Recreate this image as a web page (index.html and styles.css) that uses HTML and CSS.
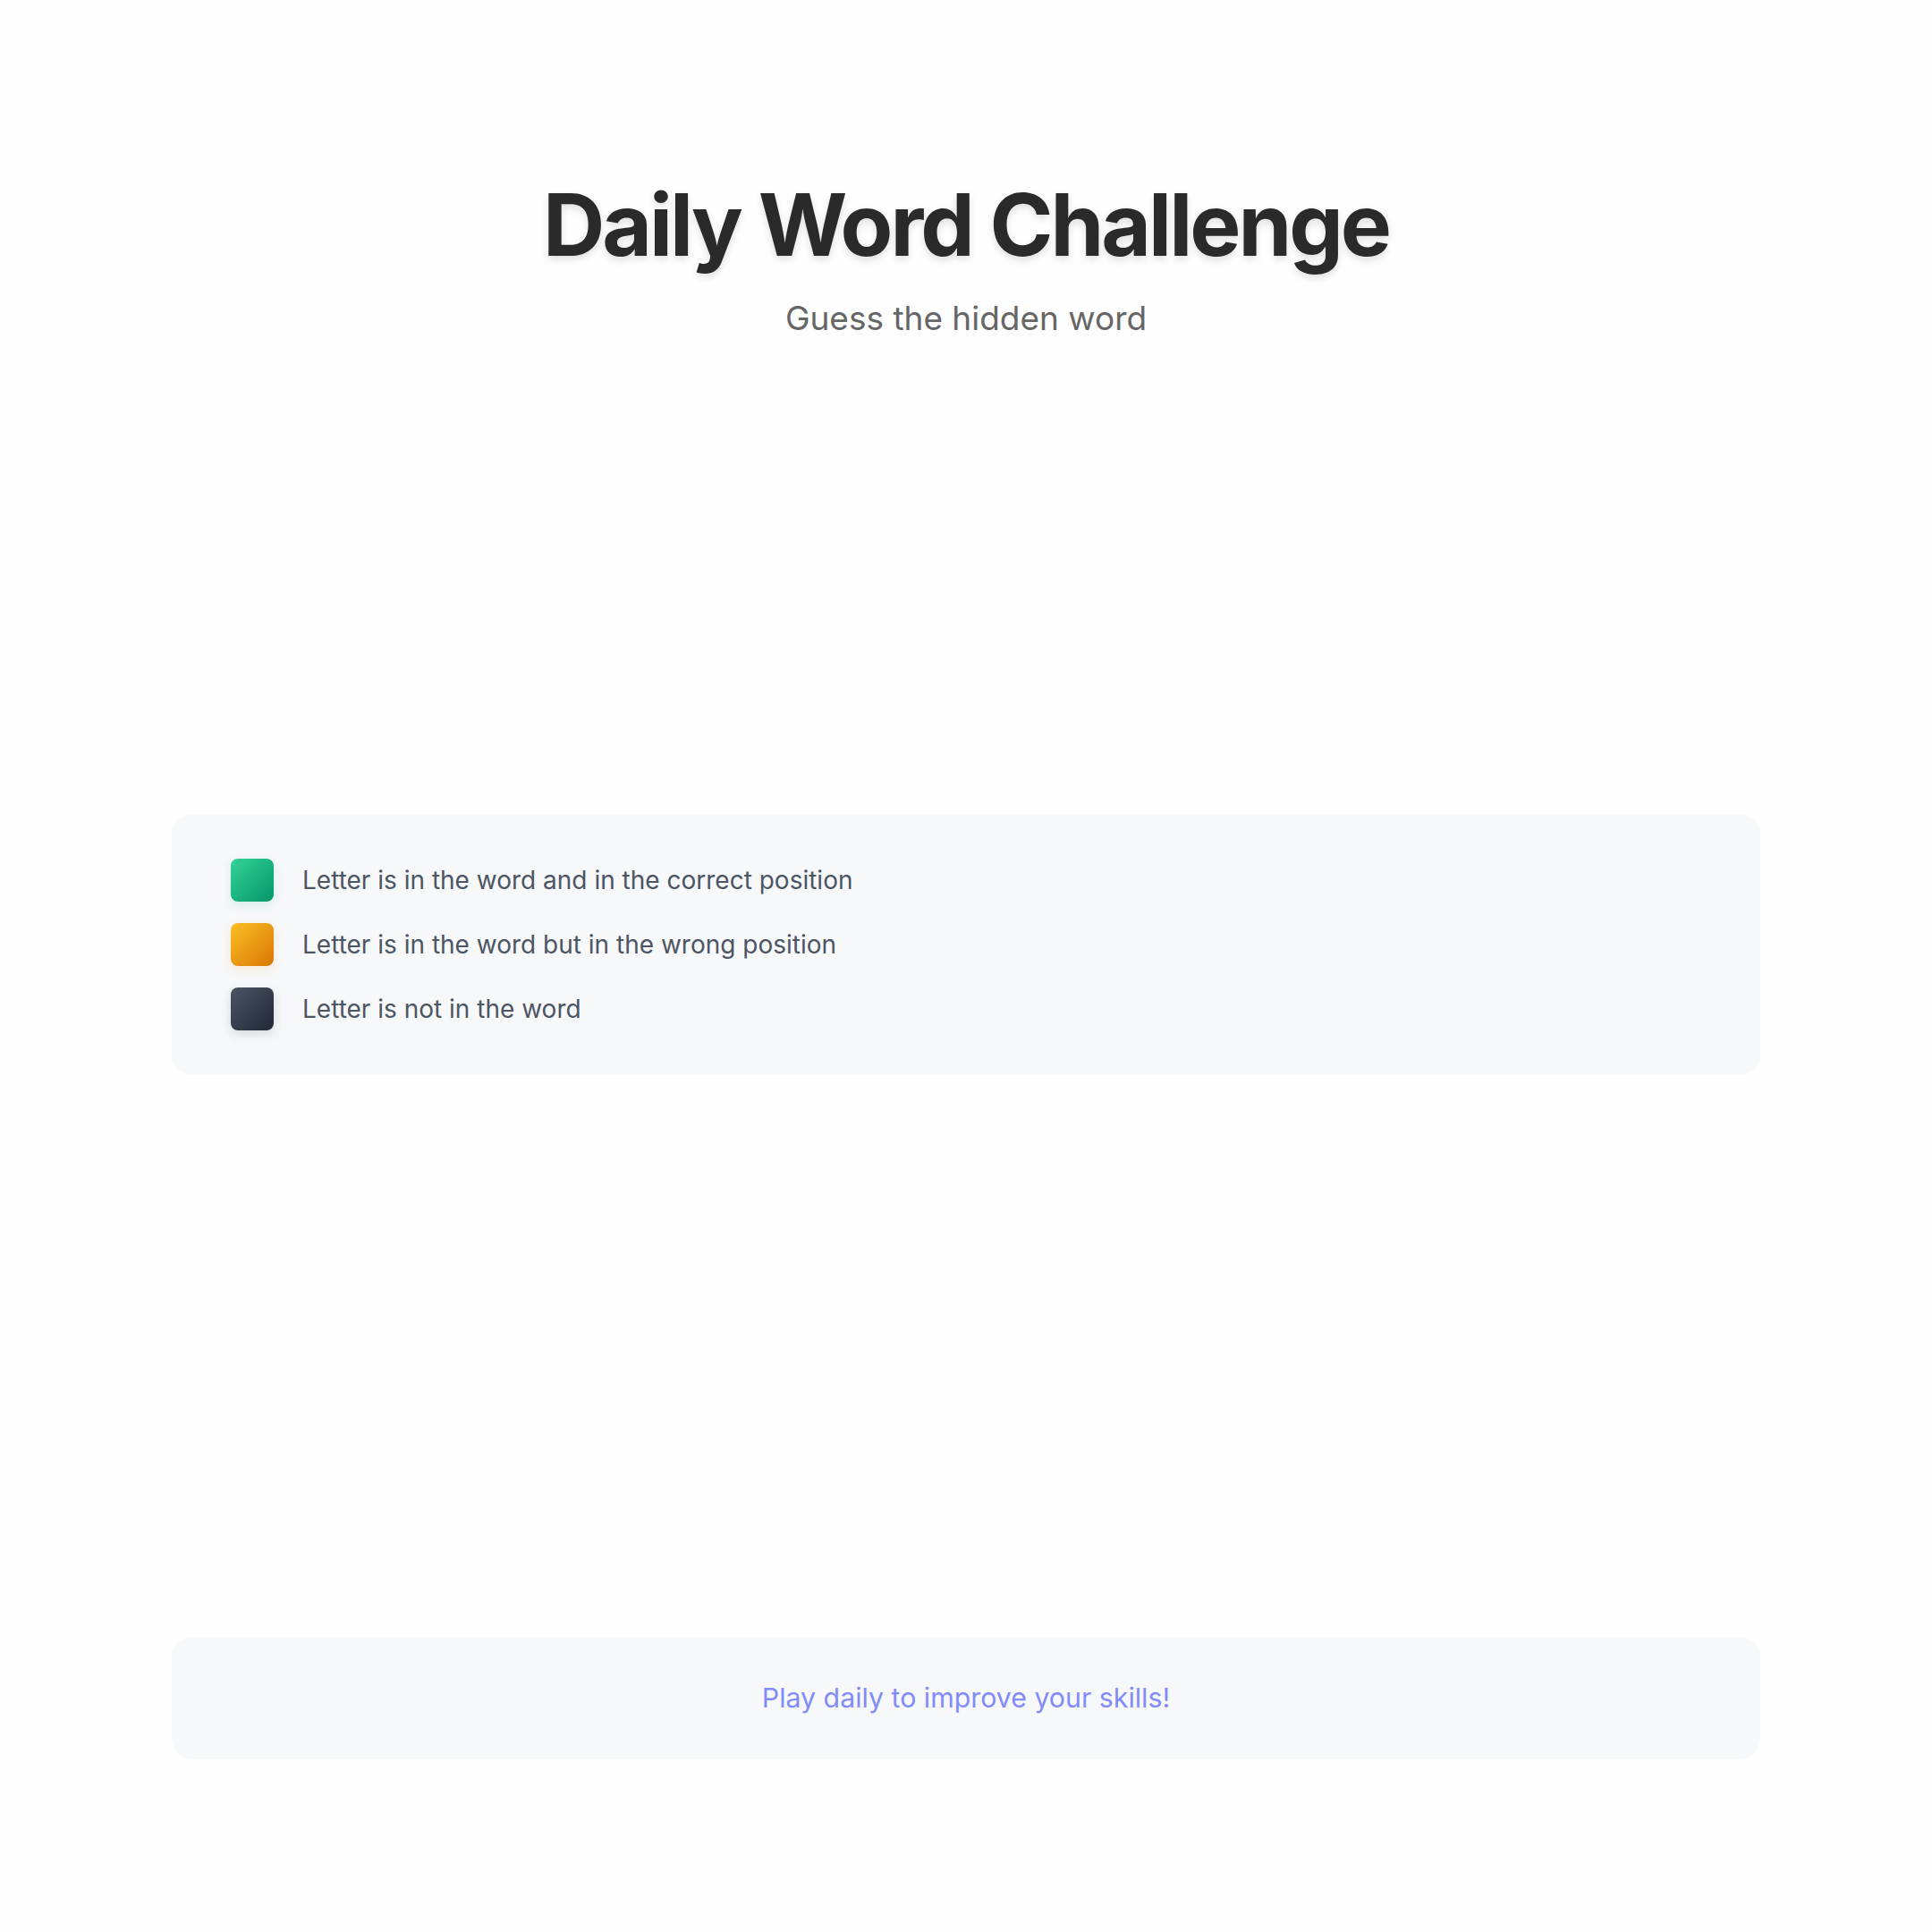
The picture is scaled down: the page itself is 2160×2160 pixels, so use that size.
FILE: index.html
```html
<!DOCTYPE html>
<html lang="en">
<head>
<meta charset="utf-8">
<title>Daily Word Challenge</title>
<link rel="stylesheet" href="styles.css">
</head>
<body>
<div class="app">
  <header class="header">
    <h1 class="title">Daily Word Challenge</h1>
    <p class="subtitle">Guess the hidden word</p>
  </header>
  <div class="board"></div>
  <section class="legend">
    <div class="legend-item">
      <span class="swatch swatch-correct"></span>
      <span class="legend-text">Letter is in the word and in the correct position</span>
    </div>
    <div class="legend-item">
      <span class="swatch swatch-present"></span>
      <span class="legend-text">Letter is in the word but in the wrong position</span>
    </div>
    <div class="legend-item">
      <span class="swatch swatch-absent"></span>
      <span class="legend-text">Letter is not in the word</span>
    </div>
  </section>
  <div class="keyboard"></div>
  <footer class="footer">
    <p class="footer-text">Play daily to improve your skills!</p>
  </footer>
</div>
</body>
</html>
```
FILE: styles.css
```css
* { box-sizing: border-box; }
html, body { margin: 0; padding: 0; }
body {
  background: #fefefe;
  font-family: Inter, "Noto Sans", "Liberation Sans", sans-serif;
}
.app {
  max-width: 1776px;
  margin: 0 auto;
  padding-top: 194px;
  display: flex;
  flex-direction: column;
}
.header { text-align: center; }
.title {
  margin: 0;
  font-size: 96px;
  font-weight: 700;
  letter-spacing: -0.031em;
  line-height: 1.2;
  color: #2a2a2a;
  text-shadow: 0 4px 8px rgba(0, 0, 0, 0.12);
}
.subtitle {
  margin: 25px 0 0;
  font-size: 37px;
  line-height: 1.2;
  color: #666666;
}
.board { height: 531px; }
.legend {
  background: #f7f8fa;
  border-radius: 24px;
  padding: 50px 66px;
  display: flex;
  flex-direction: column;
  gap: 24px;
}
.legend-item {
  display: flex;
  align-items: center;
  gap: 32px;
}
.swatch {
  width: 48px;
  height: 48px;
  border-radius: 8px;
  flex: none;
}
.swatch-correct {
  background: linear-gradient(135deg, #34d399, #059669);
  box-shadow: 0 4px 12px rgba(16, 185, 129, 0.15);
}
.swatch-present {
  background: linear-gradient(135deg, #fbbf24, #d97706);
  box-shadow: 0 4px 12px rgba(245, 158, 11, 0.15);
}
.swatch-absent {
  background: linear-gradient(135deg, #4b5563, #1f2937);
  box-shadow: 0 4px 12px rgba(31, 41, 55, 0.15);
}
.legend-text {
  font-size: 28px;
  color: #4b5563;
}
.keyboard { height: 628px; }
.footer {
  background: #f7f8fa;
  border-radius: 24px;
  padding: 49px 0;
  text-align: center;
}
.footer-text {
  margin: 0;
  font-size: 30.3px;
  line-height: 1.3;
  color: #818cf8;
}
```
